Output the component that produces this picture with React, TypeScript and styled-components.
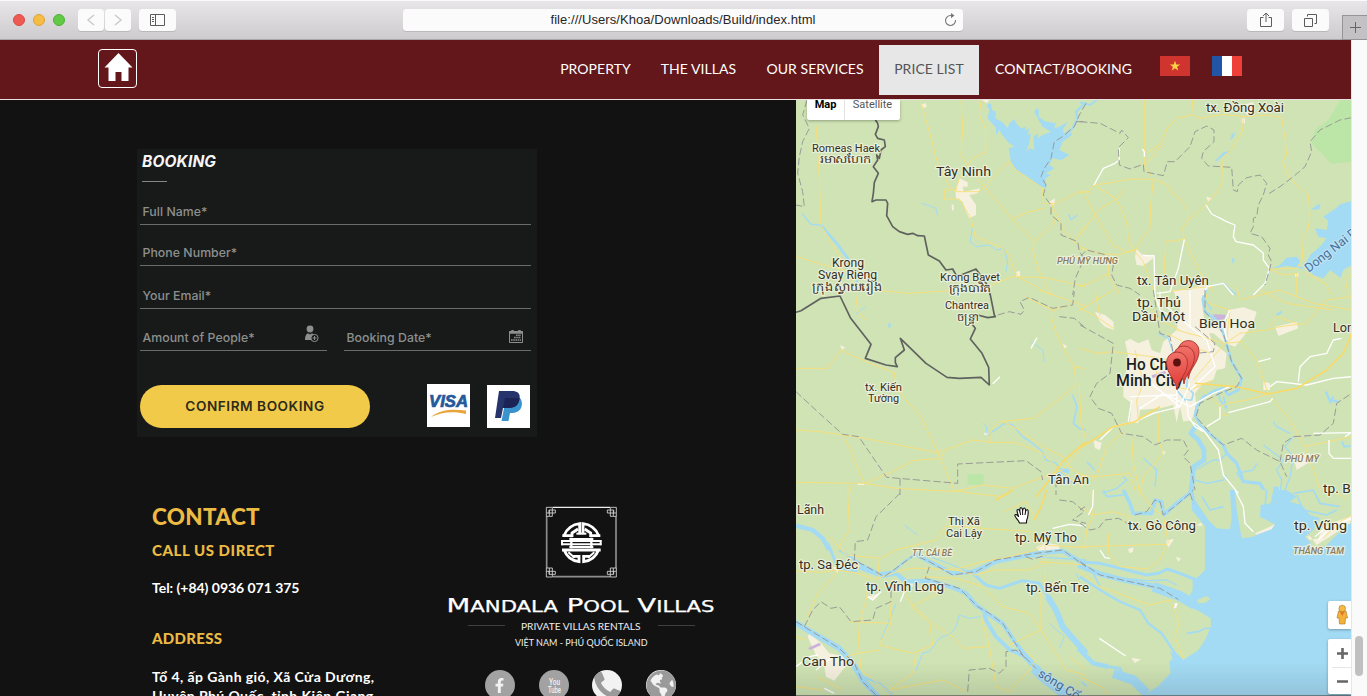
import React from 'react';
import styled, { createGlobalStyle } from 'styled-components';
import { FaFacebookF, FaPhoneAlt, FaGlobeAmericas } from 'react-icons/fa';

const GlobalStyle = createGlobalStyle`
  * { box-sizing: border-box; }
  html, body { margin: 0; padding: 0; overflow: hidden; background: #121212; }
  svg { display: block; flex: none; }
`;

const brand = 'Lato, "Open Sans", sans-serif';
const formFont = 'Inter, "Open Sans", sans-serif';

const Window = styled.div`
  width: 1367px;
  height: 696px;
  display: flex;
  flex-direction: column;
  overflow: hidden;
`;

/* ---------- browser toolbar ---------- */

const Toolbar = styled.header`
  position: relative;
  height: 40px;
  flex: none;
  display: flex;
  align-items: flex-start;
  padding: 8px 37px 0 13px;
  background: linear-gradient(#e8e6e8, #d9d7d9 55%, #cdcbcd);
  border-top: 1px solid #fafafa;
  border-bottom: 1px solid #a9a5a8;
`;

const Lights = styled.div`
  display: flex;
  gap: 8px;
  padding-top: 5px;
  width: 65px;
`;

const Light = styled.span<{ $fill: string; $edge: string }>`
  width: 12px;
  height: 12px;
  border-radius: 50%;
  background: ${(p) => p.$fill};
  border: 1px solid ${(p) => p.$edge};
`;

const ToolButton = styled.div<{ $w: number; $gap?: number }>`
  width: ${(p) => p.$w}px;
  height: 22px;
  margin-right: ${(p) => p.$gap ?? 0}px;
  display: flex;
  align-items: center;
  justify-content: center;
  flex: none;
  border-radius: 3.5px;
  background: #fcfbfc;
  box-shadow: 0 1px 0 #bab8ba;
`;

const AddressBar = styled(ToolButton)`
  position: relative;
  margin-left: 227px;
  font: 13px/22px "Liberation Sans", Arial, sans-serif;
  letter-spacing: 0.06px;
  color: #262626;
`;

const Reload = styled.div`
  position: absolute;
  right: 6px;
  top: 4px;
`;

const NewTab = styled.div`
  position: absolute;
  right: 0;
  bottom: -1px;
  width: 25px;
  height: 25px;
  display: flex;
  align-items: center;
  justify-content: center;
  background: #c3c1c3;
  border: 1px solid #969496;
  border-right: 0;
`;

/* ---------- page ---------- */

const Viewport = styled.div`
  display: flex;
  flex: 1;
  min-height: 0;
`;

const Page = styled.div`
  width: 1351px;
  display: flex;
  flex-direction: column;
`;

const ScrollTrack = styled.div`
  flex: 1;
  padding: 596px 0 0 3px;
  background: #fafafa;
  border-left: 1px solid #e6e6e6;
`;

const ScrollThumb = styled.div`
  width: 8px;
  height: 40px;
  border-radius: 4px;
  background: #c0c0c0;
`;

const Nav = styled.nav`
  height: 60px;
  flex: none;
  display: flex;
  align-items: flex-start;
  padding: 5px 0 0 98px;
  background: #63171b;
  border-bottom: 1px solid #eadfe0;
`;

const Home = styled.a`
  width: 39px;
  height: 39px;
  margin-top: 4px;
  margin-right: 408px;
  border: 1px solid #fff;
  border-radius: 4px;
`;

const NavLink = styled.a<{ $w: number; $active?: boolean }>`
  width: ${(p) => p.$w}px;
  height: 50px;
  text-align: center;
  white-space: nowrap;
  font: 14px/47px ${brand};
  letter-spacing: 0.06px;
  color: ${(p) => (p.$active ? '#555' : '#fff')};
  background: ${(p) => (p.$active ? '#e7e7e7' : 'transparent')};
`;

const Flag = styled.span<{ $gap: number }>`
  margin: 11px 0 0 ${(p) => p.$gap}px;
`;

const Body = styled.main`
  flex: 1;
  display: flex;
  min-height: 0;
`;

const Left = styled.section`
  width: 796px;
  padding: 49px 0 0 137px;
  background: #121212;
  overflow: hidden;
`;

/* ---------- booking form ---------- */

const Card = styled.form`
  width: 400px;
  height: 288px;
  padding: 2px 6px 0 3px;
  background: #171a19;
  font-family: ${formFont};
`;

const CardTitle = styled.h2`
  margin: 0 0 0 2px;
  font: italic 700 15.5px/22px ${formFont};
  color: #f6f6f6;
  letter-spacing: 0.15px;
`;

const TitleRule = styled.div`
  width: 25px;
  height: 1px;
  margin: 8px 0 0 2px;
  background: #858786;
`;

const Field = styled.div<{ $top: number; $w?: number }>`
  width: ${(p) => p.$w ?? 391}px;
  height: 26px;
  margin-top: ${(p) => p.$top}px;
  padding: 0 8px 0 2.5px;
  display: flex;
  justify-content: space-between;
  border-bottom: 1px solid #6b6d6c;
  font: 500 12.3px/26px ${formFont};
  letter-spacing: 0.04px;
  color: #8d8f8e;
`;

const FieldRow = styled.div`
  display: flex;
  justify-content: space-between;
`;

const Actions = styled.div`
  display: flex;
  margin-top: 33px;
  align-items: flex-start;
`;

const Confirm = styled.div`
  width: 230px;
  height: 43px;
  flex: none;
  margin: 1px 57px 0 0;
  border-radius: 22px;
  background: #f1ca49;
  text-align: center;
  font: 600 13.6px/42px ${formFont};
  color: #2d2a1a;
  letter-spacing: 0.55px;
`;

const PayBadge = styled.div<{ $top?: number; $gap?: number }>`
  width: 43px;
  height: 43px;
  flex: none;
  margin: ${(p) => p.$top ?? 0}px ${(p) => p.$gap ?? 0}px 0 0;
  background: #fff;
`;

/* ---------- contact ---------- */

const Footer = styled.div`
  display: flex;
  padding: 63px 0 0 15px;
`;

const Contact = styled.div`
  width: 295px;
  font-family: ${brand};
  white-space: nowrap;
`;

const ContactTitle = styled.h2`
  margin: 0;
  font: 900 22.5px/33px ${brand};
  letter-spacing: 0.3px;
  color: #ecbb43;
`;

const Subtitle = styled.h3<{ $top: number; $track: number }>`
  margin: ${(p) => p.$top}px 0 0;
  font: 900 15px/20px ${brand};
  letter-spacing: ${(p) => p.$track}px;
  color: #ecbb43;
`;

const Line = styled.p<{ $top?: number; $track?: number }>`
  margin: ${(p) => p.$top ?? 0}px 0 0;
  font: 700 14px/19px ${brand};
  letter-spacing: ${(p) => p.$track ?? 0}px;
  color: #fff;
`;

const Brand = styled.div`
  width: 268px;
  display: flex;
  flex-direction: column;
  align-items: center;
  padding-top: 6px;
`;

const Social = styled.div`
  display: flex;
  gap: 23.7px;
  margin: 17px 1px 0 0;
`;

const Circle = styled.div<{ $light?: boolean }>`
  width: 30px;
  height: 30px;
  flex: none;
  border-radius: 50%;
  overflow: hidden;
  display: flex;
  align-items: center;
  justify-content: center;
  background: ${(p) => (p.$light ? '#f2f2f2' : '#a2a2a2')};
  color: ${(p) => (p.$light ? '#9a9a9a' : '#f2f2f2')};
`;

/* ---------- map ---------- */

const MapArea = styled.section`
  position: relative;
  width: 555px;
  overflow: hidden;
  background: #cfe3b4;
`;

const MapType = styled.div`
  position: absolute;
  left: 11px;
  top: 0;
  width: 93px;
  height: 20px;
  display: flex;
  background: #fff;
  border-radius: 0 0 2px 2px;
  box-shadow: 0 1px 3px rgba(0, 0, 0, 0.3);
  font: 11px/9px Roboto, sans-serif;
  color: #565656;
`;

const TypeOption = styled.span<{ $on?: boolean }>`
  width: ${(p) => (p.$on ? 38 : 55)}px;
  text-align: center;
  font-weight: ${(p) => (p.$on ? 700 : 400)};
  color: ${(p) => (p.$on ? '#000' : '#565656')};
  border-right: ${(p) => (p.$on ? '1px solid #e3e3e3' : '0')};
`;

const Control = styled.div<{ $top: number; $h: number }>`
  position: absolute;
  right: 0;
  top: ${(p) => p.$top}px;
  width: 23px;
  height: ${(p) => p.$h}px;
  background: #fff;
  border-radius: 2px 0 0 2px;
  box-shadow: 0 1px 3px rgba(0, 0, 0, 0.3);
`;

const Shade = styled.div`
  position: absolute;
  left: 0;
  right: 0;
  bottom: 0;
  height: 34px;
  background: linear-gradient(rgba(0, 0, 0, 0), rgba(0, 0, 0, 0.1));
  border-bottom: 1px solid rgba(60, 60, 60, 0.6);
`;

type Stroke = [string, number];
interface Tile {
  x: number;
  y: number;
  water?: string;
  rivers?: Stroke[];
  land?: string;
  park?: string;
  urban?: string;
  lilac?: string;
  roads: string;
  main?: string;
  white?: string;
  admin?: string;
  border?: string;
}

/* Every tile is drawn at three units to the pixel. */
const tiles: Tile[] = [
  {
    x: 796, y: 95,
    water:
      'M572 30L585 25L588 45L600 50L597 70L617 80L625 88L635 100L640 85L655 72L660 85L675 100L690 95L688 108L700 100L695 120L705 115L700 145L690 170L700 160L715 165L712 125L725 115L725 130L740 120L765 110L740 95L725 70L715 50L722 38L728 45L728 65L745 78L775 85L780 78L775 100L790 95L815 80L800 105L805 120L825 112L828 120L800 140L790 165L820 180L795 195L770 190L760 210L775 220L750 235L765 240L748 250L752 280L735 275L700 250L660 225L645 200L638 160L655 155L635 140L615 115L610 105L600 120L600 98L575 70L580 45Z M695 190L715 178L738 183L722 198L705 202Z',
    rivers: [
      ['M805 118L830 100L845 70L840 50L870 22', 7],
      ['M818 358L825 374L845 360', 4],
      ['M18 355L45 388L75 390', 4],
      ['M75 390L100 420L130 455L155 490L150 520L185 560', 8],
      ['M375 325L400 332L420 340L425 365M530 400L522 440L540 455L580 450L600 465L625 460L635 500L630 530', 3],
    ],
    urban:
      'M490 250L515 262V275L500 275L503 290L530 285L553 280L545 295L520 300L540 330V360L520 370L510 350L500 320L480 310L478 285ZM375 28L390 25L392 36L380 40ZM558 15H580L572 25ZM758 322L776 310V328L765 334ZM660 530L672 528V545H660ZM467 330L473 328V345L468 347Z',
    roads:
      'M375 15L383 50L400 110L425 205L458 270L470 285M495 15L500 100L495 180L510 205L560 270L650 375L715 440M555 15L550 60L568 100L570 170L530 190L490 250L480 285M478 290L550 290L590 250L620 215L640 200L660 225L740 280L742 325L780 325L850 290H870M445 285H485M445 285V312H490L525 370L538 425L600 450L630 465L665 545L765 600M650 370L700 350L745 340M770 325L775 385L715 440L710 465L730 530L765 600M765 325L800 400L835 440L870 390M835 440L870 465M60 90L65 170L70 250L75 390L115 460L150 520L170 545M0 483L80 510L150 525L180 580L340 595L560 580L650 545L750 548L870 575',
    admin:
      'M33 15L20 60L40 100L20 140L10 185L5 235L20 290L25 335L0 330M870 25L850 60L835 95L800 125L775 140L765 190L745 220L735 245L750 270L742 300L765 330V360L795 385V420L845 440L850 470L865 490L838 550L830 600M840 80H870',
    border:
      'M238 75L245 85L247 95L238 118L245 130L265 135L268 155L255 165L250 190L242 180L245 195L232 215L247 235L235 262L232 295L228 320L240 315H270L275 325L272 362L290 395L310 410L335 418L350 415L365 422L385 423L397 480L430 498L450 525L470 522L480 540H495L540 522L560 550L580 580L582 600',
  },
  {
    x: 1080, y: 95,
    park: 'M780 15H815V200L755 207L695 145L705 105L745 75Z',
    water:
      'M815 318L780 328L770 338L730 365L745 378L740 405L705 400L715 425L740 430L720 455L690 480L675 510L700 540L730 550L750 525L782 548L790 525L815 510ZM692 345L712 330L722 328L718 342ZM570 523L600 510L620 488L650 485L662 500L650 518L620 512ZM455 490L465 492L458 508ZM405 198L430 172L450 168L425 186L408 200ZM450 135L455 118L466 112L460 128Z',
    rivers: [
      ['M0 22L30 30L50 15', 5],
      ['M370 600L380 575L430 565L445 580L470 600M555 565L568 525M670 520L635 512', 4],
    ],
    urban:
      'M170 462L185 478L220 482V490L190 512L170 510L165 485ZM335 580L370 570L390 572L370 600H330ZM490 30L520 20L525 50L500 60ZM378 305L398 310L385 320ZM485 70H495V85H485ZM645 535H655V545H645Z',
    roads:
      'M193 15V210L215 245M0 295L25 290L42 270L100 262L150 252L220 253L262 270L275 292L300 310L323 345V375L308 400L313 433L335 480L360 530L400 590M335 60L338 15M490 65L430 58L360 70L335 60L290 70L262 100L245 145L205 170L193 175M245 150L195 212M490 65L488 105L475 130L450 170L430 185L428 215L430 255L415 285L378 330L350 355L323 375M490 65L560 60L605 68L615 130L620 180L608 200L628 250L655 275L685 300L690 360L685 400L665 430L668 490L650 520L570 523M220 253L212 330L210 400L180 440L165 470L155 465L140 470L100 452L75 410L40 350L20 310L25 290M42 270L60 282L110 312L137 280M110 312L140 380L145 435L165 465M0 420L45 360L62 340L110 312M313 433L258 440L255 480L250 590M165 470L190 500L225 600M0 460L60 475L110 480L165 465M85 510V545L100 565L120 600M0 575L50 555L85 535M815 540L795 550L805 600M570 523L610 540L650 535V600M675 530L740 570L755 600M270 590L330 580L400 575',
    white:
      'M42 270L70 220L105 205L118 195V160M378 330L395 357L440 380L465 390L460 425L468 440L520 450L550 475V495L568 520L555 565L520 600M313 433L295 520L270 590L230 595M190 482H222L225 600M370 600L380 575L430 565L460 600M187 162L193 170V185',
    admin:
      'M0 80L60 85L100 105L120 115L125 105L145 128L115 158L118 210L150 222L190 208L192 230L250 242L262 200L285 200L330 155L345 110L380 93L402 105V140L370 170L365 190L385 213L455 217L460 285L472 290L475 270L500 248L540 240L560 265L550 300L535 330L530 365L520 370V395L510 415L545 425L570 460L565 480L575 500L568 525L555 570M815 68L780 75L720 105L690 140L695 170L675 215L640 245L600 275L560 300M0 485L20 465L80 480L100 510L95 540L110 570L150 580L180 600',
  },
  {
    x: 796, y: 290,
    park: 'M515 552H563V584H515Z',
    water: 'M276 102L284 99V112H277Z',
    rivers: [
      ['M180 72L208 50M705 155L740 180L745 215M560 400L572 410V430L590 440', 3],
      ['M830 315L843 350L832 400L850 415L870 420', 5],
      ['M580 430L605 415L625 400L650 405L680 440L710 460L740 485L750 510L780 520L800 550L830 580', 4],
      ['M770 570L800 540L820 545', 12],
    ],
    urban: 'M132 165L148 172L138 180ZM800 160L815 170L805 175ZM565 428H578V435H565ZM185 580H205V585H185Z',
    roads:
      'M178 10L185 60L210 93M0 235H95L135 180L170 197L210 215L295 248L300 290L330 330L375 380L425 488L440 520L475 605M0 420L70 425L190 442L425 488M585 457L585 420L610 395L715 385L840 285L835 230L805 180L780 130L765 75L770 60L690 22M835 230L870 237M850 280L855 400L870 450M205 580L290 545L350 512L435 505L445 485M145 440L205 580L0 577M205 580L300 595L475 605L560 585L650 595L800 540L870 460M165 585L160 615M730 0L800 25L870 50M820 45L770 60M800 500L830 540L870 560M620 395L670 420L740 470L800 500M425 488L530 450L585 457L660 458L740 490L790 540L830 570',
    main: 'M720 620L760 570L800 515L870 455',
    white: 'M590 282L612 260M705 175L723 143',
    admin:
      'M0 305L70 370L140 433L188 440L272 562L485 580V522L690 512L735 545L740 570M312 565V615M605 75L640 65L675 73L685 60L672 35L700 22L770 55L830 45L835 5M790 80L835 85L870 115M780 570V615',
    border:
      'M582 10L595 75L598 80L575 83L545 75L530 85V105L538 115L523 147L558 190L578 232L580 285L555 262L490 265L453 262L390 220L313 145L325 180L298 203V218L304 230L270 225L208 205L225 163L163 83L132 18L75 25L15 62L0 67',
  },
  {
    x: 1080, y: 290,
    urban:
      'M135 155L150 146L175 160L205 148L215 180L240 190L250 155L290 120L300 60L280 0H370L368 60L375 100L400 160L440 190L435 235L410 240L400 270L370 280L345 310L350 350L335 390L310 395L300 350L290 398L280 345L240 355L180 360L175 400L150 395L155 340L130 320V270L140 240L145 200ZM445 60L490 52L530 65L520 100L490 140L465 170L435 160L400 130L375 130L390 100L440 95ZM45 65L75 75L100 95L102 120L75 110L60 95ZM585 110L650 95L655 115L595 138ZM550 275L570 280V300H550ZM40 450L65 458L60 480L45 475ZM640 500L690 490L690 515L650 540ZM245 482L258 486L250 495ZM240 0L250 60L230 45Z',
    lilac: 'M398 73L436 74V86L410 92ZM215 256L255 243L260 250L218 265Z',
    rivers: [
      ['M378 0L368 30L375 65L415 95L430 130L438 155L455 215L485 265L475 300L445 315L430 295L410 300L370 320L350 350L345 375L360 405L400 440L430 465', 8],
      ['M290 300L315 330L335 330L340 310L320 290L325 230M415 305L420 330L440 355L430 320', 5],
      ['M350 405L332 430L355 450L372 480L372 510L340 530L335 600', 14],
      ['M430 465L440 490L470 520L490 575L540 580L560 615', 10],
      ['M550 465L610 510L590 540L605 570L600 615M640 440L615 470L640 500L630 560L615 600M580 395L590 410L630 430M490 575L470 550L520 540L530 520M235 130L265 145L280 190M345 540L400 510L420 510L440 490M345 570L380 580L430 570L440 555M65 610L110 595L140 570L130 560M190 505L230 540L225 590M20 515L45 540M370 20L395 60', 4],
      ['M738 305L748 330L775 335M590 75L605 65M750 340L760 320', 7],
      ['M787 455L792 470L812 468', 6],
    ],
    roads:
      'M0 55L50 80L100 115M100 185L215 200L300 220M0 175L50 190L100 185L100 160M235 370V450L250 490L190 560L180 610M435 160L400 200L340 270M435 160L480 130L560 120L600 110L680 100L740 30L815 20M480 150L530 210L565 312L630 390L675 470L720 600M565 312L500 330L445 340L420 350M345 280L400 330L420 350V375H445M155 440L160 520L180 610M130 425L80 470L50 560L0 555M815 60L700 40L600 0M540 0L620 40L760 60M470 -10L480 30L600 0M675 470L815 440M0 590L50 560L150 550L165 600M0 60L100 0M45 0L60 80M190 30L240 90L300 120M165 180L190 280L170 330L175 390M260 130L340 170L390 190M375 0L385 40L450 60L440 150M215 200L240 280L330 300L400 270M570 110L590 80L650 100M290 120L435 160L485 155',
    main:
      'M0 472L40 450L100 410L165 395L240 350M345 280L470 290L565 312L650 295L740 240L790 190L815 130',
    white:
      'M60 450L100 410L165 395L220 370L300 350L330 280M445 368L570 335L578 325M570 290L590 275L680 285L760 265L815 260M655 275L660 230L690 200L740 190L760 150L785 145M535 215L572 205M330 0V110L380 150L405 230L330 300M155 330L145 395M330 390L370 420L415 480L430 555L475 610M320 330L325 380L345 410L370 425M420 350V385L380 410M747 450V490L760 505H815M180 355L250 310L300 350M200 270L250 310L330 350L400 310L450 290M150 320L290 315M260 50L330 110M290 300V350M700 430L815 428L795 440M220 0L240 60L300 90M450 60L430 100L440 150',
    admin:
      'M0 105L100 160L90 250L50 280L30 320L55 355L95 370L125 430L190 440L225 465L260 450H310L325 480L310 500L330 520L345 600M220 0L240 130L270 140L280 190M345 110L405 160L400 185L350 190M375 0V65L430 130L455 215L485 265L470 290L420 310L360 340L348 380L400 440L430 465L485 445L530 480L600 515L620 560M600 515L610 460L640 440L720 435L760 400L770 340L815 310',
  },
  {
    x: 796, y: 490,
    urban:
      'M40 430L75 460L100 490L150 500L160 520L140 540L115 572L90 560L85 530L60 495L35 440ZM720 172L750 158L790 165V178L730 182ZM110 232L130 225L125 250ZM330 285L350 275L350 290ZM215 320L250 310L230 330Z',
    lilac: 'M36 474L70 458L75 466L42 480Z',
    rivers: [
      ['M0 107L50 120L80 145L100 180', 13],
      ['M95 160L110 195L125 235L185 242', 9],
      ['M130 180L200 225L250 250L290 245L325 215L355 195', 7],
      ['M190 232L260 258L300 250L330 275L400 272L470 292L510 310L540 345L575 370L620 400L660 460L690 500', 13],
      ['M355 190L400 215L470 250L540 245L600 215L720 190L800 183L870 225', 13],
      ['M530 250L570 285L610 295L680 272L730 280L760 325', 9],
      ['M755 320L780 360L800 410L835 450L870 490', 18],
      ['M565 370L570 390L600 440L640 478L690 500', 12],
      ['M680 490L720 535', 18],
      ['M715 535L740 560L810 615', 30],
      ['M-5 396L60 435L130 475L170 520L200 570L245 620', 17],
      ['M200 560L250 580L290 615', 7],
      ['M555 380L520 385L490 375L480 410L465 430L430 445L400 485L380 490L360 540M325 105L365 135M760 400L805 440L790 475M300 340L280 390L255 450M840 250L850 270', 3],
      ['M390 195L470 225L520 245L610 205L710 200L870 210', 4],
    ],
    roads:
      'M0 243L75 247L125 240L185 250L235 268L290 250L340 235L400 235L470 240L560 215L640 200L720 180L740 165L870 173M155 0L160 120L130 170L150 195L255 205L300 180L420 150L450 108L560 115L710 125M100 140L150 195M720 90L690 35L625 65M245 205L250 265M125 245L65 310L35 380M213 268V320L190 400L185 490M290 270L280 300L285 400L160 395M285 400L250 465L350 490L410 465L400 395L345 340L320 300M400 395L345 350L425 310M400 395L470 440L500 475L580 470L555 380M580 470L600 590L640 605L700 540L720 510L690 480M735 420V300M380 260L480 265L560 290L620 350L700 370L735 420L810 540L870 555M735 420L640 465M470 0L530 10L620 20L650 0M360 490L350 550L280 600L440 570L510 605M0 440L30 450M150 500L185 490L250 480M190 490L195 540L290 615M745 130L750 215L745 300M730 215L870 225M460 235L540 255L590 240H700L750 215M65 560L140 600M870 540L820 500M0 590L80 600',
    main: 'M752 0L735 50L715 90M600 30L650 0',
    white: 'M770 115L820 103L870 108M325 305L313 335M215 320L230 330L255 305M0 530L40 500L65 495M60 540L110 500M85 595L115 610',
    admin:
      'M312 10L240 80L215 150L178 155L175 210L230 240L265 260L355 195L400 215L470 255L540 245L600 210L720 190L800 180L870 230M400 230L388 265L490 295L545 350L580 370L620 400L680 495L720 535M25 410L50 360L75 335L105 355L130 350L165 395L230 390L240 355L285 335V290M0 395L130 475L175 520L200 575L240 615M515 605L520 540L580 535L610 550L630 530V485L660 480L690 505M790 30L830 35L865 65L830 90L870 100M690 200L710 208L750 195',
  },
  {
    x: 1080, y: 490,
    water:
      'M335 0H815V620H185L235 588L272 548L268 515L278 505L270 485L290 490L310 510L355 480L375 450L393 410L392 385L360 365L290 330L240 300L270 292L325 325L338 300V270L350 265L375 240V108L335 60Z',
    land:
      'M340 0L345 30L385 90L410 115L450 118L455 85L450 0ZM465 0L470 60L485 145L520 140L585 103L540 80L542 45L590 40L580 0ZM620 0L650 20L630 35L665 45L690 75L720 85L700 120L675 140L690 155L705 195L740 165L775 130L815 95V0ZM350 330L380 318L392 328L375 338L355 340Z',
    urban:
      'M525 130L585 103L575 118L530 134ZM680 140L690 138L710 165L750 140L815 95V78L765 95L730 110L715 145L690 150ZM145 178L160 172L158 186L148 188ZM258 152L282 147L265 172ZM288 202L302 205L296 215ZM155 505L182 508L165 518ZM70 385L75 395ZM282 340L293 342L288 355ZM350 105L365 98V108Z',
    rivers: [
      ['M-5 215L60 220L100 230L200 255L235 250L262 237L300 250L350 270', 9],
      ['M-5 225L60 252L130 270L240 292L300 318', 16],
      ['M220 290L300 318L345 345', 30],
      ['M80 252L110 262L200 272L260 270L290 285', 4],
      ['M0 260L60 300L120 335L180 360L205 400L245 430L285 490', 7],
      ['M-5 475L40 520L85 530', 14],
      ['M100 550L160 570L200 610', 28],
      ['M85 530L120 535L130 560', 8],
      ['M130 0L150 40L160 70L215 70L225 30L245 35L250 75L290 40L330 10L335 -20', 11],
      ['M70 0L80 20L130 15M365 20L390 60L430 50M560 0L555 50M640 10L700 0L720 40L780 50M650 15L670 60L740 75L770 60M320 430L355 425L375 415L393 415M40 250L60 290M20 590L5 575', 5],
      ['M590 -10L580 40L550 70', 16],
      ['M455 0L462 60L458 110', 9],
    ],
    roads:
      'M0 170L260 163L240 210L205 237L120 230L85 190V130M35 75L100 65L150 80L130 100M180 5L215 50L250 80L265 160M15 170L20 120L40 75L0 50M0 245L60 290L210 345L270 330L298 400L285 440L310 505M0 560L65 590L85 615M730 145L780 95L815 75M750 0L800 25M35 75L40 0',
    white: 'M40 0L38 50L25 75M60 180L75 203L90 205M58 445L137 498M283 355L290 340M465 0L490 50L495 100L520 125M715 150L755 108L815 85M705 140L740 110',
    admin:
      'M0 215L60 255L240 295L295 328M0 100L30 120L55 115L75 90L115 85L135 95L150 110M165 75L200 65L225 30L240 35L250 75L290 45L330 10L340 0M330 10L340 40M0 60L15 50',
  },
];

interface Label {
  t: string;
  x: number;
  y: number;
  w: number;
  s?: number;
  kind?: 'area' | 'city' | 'water' | 'khmer';
  rot?: number;
}

const labels: Label[] = [
  { t: 'tx. Đồng Xoài', x: 1206, y: 112.5, w: 78 },
  { t: 'Tây Ninh', x: 936, y: 176, w: 55 },
  { t: 'Romeas Haek', x: 812, y: 152.5, w: 68, s: 11 },
  { t: 'រមាសហែក', x: 820, y: 163, w: 51, s: 11, kind: 'khmer' },
  { t: 'Krong', x: 832, y: 267.5, w: 32, s: 12 },
  { t: 'Svay Rieng', x: 818, y: 279.5, w: 59, s: 12 },
  { t: 'ក្រុងស្វាយរៀង', x: 812, y: 291, w: 71, s: 12, kind: 'khmer' },
  { t: 'Krong Bavet', x: 940, y: 281.5, w: 60, s: 11 },
  { t: 'ក្រុងបាវិត', x: 949, y: 292, w: 42, s: 11, kind: 'khmer' },
  { t: 'Chantrea', x: 945, y: 309.5, w: 44, s: 11 },
  { t: 'ចន្ទ្រា', x: 957, y: 321, w: 21, s: 11, kind: 'khmer' },
  { t: 'PHÚ MỸ HƯNG', x: 1057, y: 264, w: 61, s: 9, kind: 'area' },
  { t: 'tx. Tân Uyên', x: 1137, y: 285.5, w: 72 },
  { t: 'tp. Thủ', x: 1137, y: 307.5, w: 44 },
  { t: 'Dầu Một', x: 1132, y: 321.5, w: 53 },
  { t: 'Bien Hoa', x: 1199, y: 328, w: 56 },
  { t: 'Lon', x: 1333, y: 332.5, w: 21 },
  { t: 'Ho Chi', x: 1126, y: 370, w: 46, kind: 'city' },
  { t: 'Minh City', x: 1116, y: 386, w: 67, kind: 'city' },
  { t: 'tx. Kiến', x: 865, y: 391.5, w: 37, s: 11 },
  { t: 'Tường', x: 868, y: 402.5, w: 31, s: 11 },
  { t: 'PHÚ MỸ', x: 1285, y: 462, w: 34, s: 9, kind: 'area' },
  { t: 'Tân An', x: 1048, y: 484.5, w: 41 },
  { t: 'tp. Bà Rịa', x: 1323, y: 493.5, w: 58 },
  { t: 'Lãnh', x: 797, y: 514, w: 27 },
  { t: 'Thị Xã', x: 948, y: 525.5, w: 32, s: 11 },
  { t: 'Cai Lậy', x: 946, y: 537, w: 36, s: 11 },
  { t: 'tp. Mỹ Tho', x: 1015, y: 542.5, w: 62 },
  { t: 'tx. Gò Công', x: 1128, y: 530.5, w: 68 },
  { t: 'tp. Vũng Tàu', x: 1294, y: 530, w: 80 },
  { t: 'TT. CÁI BÈ', x: 912, y: 556, w: 40, s: 9, kind: 'area' },
  { t: 'THẮNG TAM', x: 1293, y: 554, w: 51, s: 9, kind: 'area' },
  { t: 'tp. Sa Đéc', x: 799, y: 569.5, w: 59 },
  { t: 'tp. Vĩnh Long', x: 866, y: 591.5, w: 78 },
  { t: 'tp. Bến Tre', x: 1026, y: 592.5, w: 63 },
  { t: 'Can Tho', x: 802, y: 666, w: 52 },
  { t: 'Dong Nai River', x: 1309, y: 273, w: 82, s: 12.5, kind: 'water', rot: -38 },
  { t: 'sông Cổ Chiên', x: 1037, y: 676, w: 82, s: 12.5, kind: 'water', rot: 32 },
];

const labelFill = { area: '#8a7a5c', city: '#1e1e1e', water: '#46709e', khmer: '#3a3224', town: '#352e22' };

function Layer({ draw }: { draw: (t: Tile) => React.ReactNode }) {
  return (
    <>
      {tiles.map((t) => (
        <g key={`${t.x}-${t.y}`} transform={`translate(${t.x} ${t.y}) scale(.33333)`}>
          {draw(t)}
        </g>
      ))}
    </>
  );
}

function Pin({ x, y, dot }: { x: number; y: number; dot?: boolean }) {
  return (
    <g transform={`translate(${x} ${y})`}>
      <path
        d="M0 0C-1 -10 -10.5 -16 -10.5 -27.5A10.5 10.5 0 0 1 10.5 -27.5C10.5 -16 1 -10 0 0Z"
        fill="url(#pin)" stroke="#a8322c" strokeWidth=".9"
      />
      {dot && <circle cy="-27.5" r="3.9" fill="#5a120e" />}
    </g>
  );
}

function MapDrawing() {
  return (
    <svg width="555" height="596" viewBox="796 100 555 596" fill="none" strokeLinejoin="round">
      <defs>
        <linearGradient id="pin" x1="0" y1="0" x2="0" y2="1">
          <stop offset="0" stopColor="#f0716a" />
          <stop offset="1" stopColor="#df3a33" />
        </linearGradient>
      </defs>
      <Layer draw={(t) => (
        <>
          <path d={t.park} fill="#bce5a8" />
          <path d={t.urban} fill="#f6f0df" />
          <path d={t.lilac} fill="#cbb3dc" />
        </>
      )} />
      <Layer draw={(t) => (
        <>
          <path d={t.water} fill="#a3dbf4" />
          <path d={t.land} fill="#cfe3b4" />
          {t.land && <path d={t.urban} fill="#f6f0df" />}
          {t.rivers?.map(([d, w]) => <path key={d} d={d} stroke="#a3dbf4" strokeWidth={w} />)}
        </>
      )} />
      <Layer draw={(t) => <path d={t.roads} stroke="#f9df78" strokeWidth="2.8" />} />
      <Layer draw={(t) => <path d={t.white} stroke="#fff" strokeWidth="4" />} />
      <Layer draw={(t) => <path d={t.main} stroke="#fbd963" strokeWidth="4.5" />} />
      <Layer draw={(t) => <path d={t.admin} stroke="#9a9b98" strokeWidth="3" strokeDasharray="22 9" />} />
      <Layer draw={(t) => <path d={t.border} stroke="#5f625e" strokeWidth="5" />} />
      {labels.map((l) => {
        const kind = l.kind ?? 'town';
        return (
          <text
            key={l.t} x={l.x} y={l.y - 0.4} textLength={l.w} lengthAdjust="spacingAndGlyphs"
            transform={l.rot ? `rotate(${l.rot} ${l.x} ${l.y})` : undefined}
            fontFamily='Roboto, "Noto Sans", "DejaVu Sans", sans-serif'
            fontSize={l.s ?? (kind === 'city' ? 16 : 13.6)}
            fontWeight={kind === 'city' || kind === 'area' ? 500 : 400}
            fontStyle={kind === 'area' ? 'italic' : 'normal'}
            fill={labelFill[kind]} stroke={kind === 'water' ? '#c4e6f4' : '#f1f4e4'}
            strokeWidth="2.4" strokeOpacity=".8" paintOrder="stroke"
          >
            {l.t}
          </text>
        );
      })}
      <Pin x={1188.5} y={378.5} />
      <Pin x={1184} y={384} />
      <Pin x={1177} y={390} dot />
      <path
        transform="translate(1014 507)"
        d="M4.5 14C3 11.5 1 10 .8 8.5C1 7 3 7.5 4 9L4.5 9.5C4 7.5 2.800 4.500 3 3.300C3.500 2 5 2.300 5.500 3.800L6 5C5.800 3.500 5.600 1.500 6.500 .8C7.800 .3 8.500 1.500 8.600 4C8.800 2 9.300 .9 10.400 1C11.700 1.200 11.600 3 11.500 4.600C11.900 3.200 12.500 2.500 13.500 2.800C14.600 3.300 14.200 5 14.100 7C14 10 13.500 11.500 12.500 14V16H5.500Z"
        fill="#fff" stroke="#111" strokeWidth="1.1"
      />
      <path transform="translate(1014 507)" d="M6 5L6.600 8M8.600 4V8M11.500 4.600L11 8" stroke="#111" strokeWidth="1" />
    </svg>
  );
}

/* ---------- brand emblem, three units to the pixel ---------- */

function Emblem() {
  const corner = 'M1 19V1H19V9M9 19V9H28V18H1M10 28V9M10 28H19V9M1 19V28H10';
  return (
    <svg width="72" height="72" viewBox="345 49 216 216" fill="none" stroke="#eee">
      <path d="M350 80V235M558 80V235M368 261H540" stroke="#8e8e8e" strokeWidth="5" />
      <path d="M368 53H540" strokeWidth="4" />
      <g strokeWidth="2.6" stroke="#d6d6d6">
        <path d={corner} transform="translate(348 52)" />
        <path d={corner} transform="translate(560 52) scale(-1 1)" />
        <path d={corner} transform="translate(348 263) scale(1 -1)" />
        <path d={corner} transform="translate(560 263) scale(-1 -1)" />
      </g>
      <g stroke="#fff" strokeWidth="8.5">
        <path d="M402 138A57 57 0 0 1 449 102V134M506 138A57 57 0 0 0 459 102V134" />
        <path d="M397 138H426V130L444 118M511 138H482V130L464 118" />
        <path d="M439 132H469" strokeWidth="6" />
        <path d="M418 148H490M394 154H514M394 164H514M418 172H490" strokeWidth="6" />
        <path d="M396 151V167M512 151V167" strokeWidth="6" />
        <path d="M424 144V176M484 144V176" strokeWidth="7" />
        <path d="M396 181H512M402 180A57 57 0 0 0 447 216V200H428M506 180A57 57 0 0 1 461 216V200H480" />
        <path d="M415 188L434 204M493 188L474 204" strokeWidth="6" />
      </g>
    </svg>
  );
}

function Wordmark() {
  const words = ['Mandala', 'Pool', 'Villas'];
  return (
    <svg width="268" height="75" viewBox="447 578 268 75" fill="#fff">
      <text x="446.500" y="611.500" textLength="268" lengthAdjust="spacingAndGlyphs" fontFamily='"DejaVu Sans", sans-serif' stroke="#fff" strokeWidth=".25">
        {words.map((w, i) => (
          <React.Fragment key={w}>
            <tspan fontSize="19.500">{(i ? ' ' : '') + w[0]}</tspan>
            <tspan fontSize="15">{w.slice(1).toUpperCase()}</tspan>
          </React.Fragment>
        ))}
      </text>
      <path d="M468 625.500H505M658 625.500H695" stroke="#3f3f3f" />
      <g fontFamily="Lato, sans-serif" fontSize="10" fill="#eee">
        <text x="521" y="629.500" textLength="119.500" lengthAdjust="spacingAndGlyphs">PRIVATE VILLAS RENTALS</text>
        <text x="515" y="646" textLength="132.500" lengthAdjust="spacingAndGlyphs">VIỆT NAM - PHÚ QUỐC ISLAND</text>
      </g>
    </svg>
  );
}

export default function App() {
  return (
    <Window>
      <GlobalStyle />
      <Toolbar>
        <Lights>
          <Light $fill="#ee5a52" $edge="#da4a44" />
          <Light $fill="#f6bd45" $edge="#dfa23a" />
          <Light $fill="#62c944" $edge="#4fb034" />
        </Lights>
        <ToolButton $w={26} $gap={1}>
          <svg width="10" height="12" fill="none" stroke="#c9c9c9" strokeWidth="1.400"><path d="M8 1L2 6L8 11" /></svg>
        </ToolButton>
        <ToolButton $w={26} $gap={8}>
          <svg width="10" height="12" fill="none" stroke="#c9c9c9" strokeWidth="1.400"><path d="M2 1L8 6L2 11" /></svg>
        </ToolButton>
        <ToolButton $w={37}>
          <svg width="16" height="12" fill="none" stroke="#5c5c5c"><path d="M.5.5H14.500V11.500H.5ZM5.500.5V11.500M2 3.500H4M2 5.500H4M2 7.500H4" /></svg>
        </ToolButton>
        <AddressBar $w={560} $gap={284}>
          file:///Users/Khoa/Downloads/Build/index.html
          <Reload>
            <svg width="13" height="14" fill="none" stroke="#777" strokeWidth="1.100">
              <path d="M11.500 7A5 5 0 1 1 6.500 2.500H8" />
              <path d="M7 0L10.500 2.600L7 5.200Z" fill="#777" stroke="none" />
            </svg>
          </Reload>
        </AddressBar>
        <ToolButton $w={37} $gap={8}>
          <svg width="12" height="16" fill="none" stroke="#5c5c5c"><path d="M3.500 5.500H.5V14.500H11.500V5.500H8.500M6 10V1M3 4L6 1L9 4" /></svg>
        </ToolButton>
        <ToolButton $w={37}>
          <svg width="13" height="13" fill="none" stroke="#5c5c5c"><path d="M.5 4.500H8.500V12.500H.5ZM3.500 2.500V.5H12.500V9.500H10.500" /></svg>
        </ToolButton>
        <NewTab>
          <svg width="11" height="11" stroke="#666"><path d="M5.500 0V11M0 5.500H11" /></svg>
        </NewTab>
      </Toolbar>
      <Viewport>
        <Page>
          <Nav>
            <Home>
              <svg width="37" height="37" fill="#fff"><path d="M19.500 3L33.500 17.500H29.500V31H22.500V22H16.500V31H9.500V17.500H5.500Z" /></svg>
            </Home>
            <NavLink $w={101}>PROPERTY</NavLink>
            <NavLink $w={105}>THE VILLAS</NavLink>
            <NavLink $w={128}>OUR SERVICES</NavLink>
            <NavLink $w={100} $active>PRICE LIST</NavLink>
            <NavLink $w={169}>CONTACT/BOOKING</NavLink>
            <Flag $gap={12}>
              <svg width="30" height="20">
                <path d="M0 0H30V20H0Z" fill="#d0342f" />
                <path d="M15 4.800L16.300 8.500H20.200L17.100 10.800L18.200 14.600L15 12.300L11.800 14.600L12.900 10.800L9.800 8.500H13.700Z" fill="#f9d343" />
              </svg>
            </Flag>
            <Flag $gap={22}>
              <svg width="30" height="20">
                <path d="M0 0H10V20H0Z" fill="#2156a5" />
                <path d="M10 0H20V20H10Z" fill="#fff" />
                <path d="M20 0H30V20H20Z" fill="#ee4039" />
              </svg>
            </Flag>
          </Nav>
          <Body>
            <Left>
              <Card>
                <CardTitle>BOOKING</CardTitle>
                <TitleRule />
                <Field $top={17}>Full Name*</Field>
                <Field $top={15}>Phone Number*</Field>
                <Field $top={17}>Your Email*</Field>
                <FieldRow>
                  <Field $top={16} $w={187}>
                    Amount of People*
                    <svg width="14" height="18" viewBox="0 0 14 18" fill="#8d8f8e">
                      <circle cx="5" cy="4" r="3.400" />
                      <path d="M0 15C0 10 2 8.500 3 8.200L5 9.500L7 8.200L9 9.500L8 15Z" />
                      <circle cx="9.500" cy="13" r="3.600" fill="#171a19" stroke="#8d8f8e" />
                      <path d="M7.500 12.500H11.500V13.500H7.500ZM9 11H10V15H9Z" />
                    </svg>
                  </Field>
                  <Field $top={16} $w={187}>
                    Booking Date*
                    <svg width="14" height="19" viewBox="0 0 14 19" fill="none" stroke="#8d8f8e">
                      <path d="M.5 6.500H13.500V17.500H.5Z" />
                      <path d="M0 7.500H14M3.500 5V8M10.500 5V8" strokeWidth="2.400" />
                      <path d="M2 15H12M5 12.500H12M7 10.300H12" strokeWidth="1.600" strokeDasharray="1.600 .6" />
                    </svg>
                  </Field>
                </FieldRow>
                <Actions>
                  <Confirm>CONFIRM BOOKING</Confirm>
                  <PayBadge $gap={17}>
                    <svg width="43" height="43">
                      <text x="2" y="23" textLength="39" lengthAdjust="spacingAndGlyphs" fontFamily='"Liberation Sans", sans-serif' fontSize="16.500" fontWeight="700" fontStyle="italic" fill="#24599a" stroke="#24599a" strokeWidth=".7">VISA</text>
                      <path d="M4 33C14 25 26 25 39 26.500V30C26 27 15 28 4 33Z" fill="#e9a53c" />
                    </svg>
                  </PayBadge>
                  <PayBadge $top={1}>
                    <svg width="43" height="43">
                      <path d="M19 13H33C37 18 35 28 25.500 28H23L21.500 36H14.500Z" fill="#3b93cd" />
                      <path d="M12 6H25C32 6 34 10 32 16C30.500 21 27 23 21 23H16L14 33H8Z" fill="#26346c" />
                      <path d="M18 13H32.500C32 20 28 23 21 23H16Z" fill="#1c2456" />
                    </svg>
                  </PayBadge>
                </Actions>
              </Card>
              <Footer>
                <Contact>
                  <ContactTitle>CONTACT</ContactTitle>
                  <Subtitle $top={7} $track={0.55}>CALL US DIRECT</Subtitle>
                  <Line $top={18} $track={-0.03}>Tel: (+84) 0936 071 375</Line>
                  <Subtitle $top={31} $track={0.3}>ADDRESS</Subtitle>
                  <Line $top={19} $track={0.41}>Tổ 4, ấp Gành gió, Xã Cửa Dương,</Line>
                  <Line $track={0.41}>Huyện Phú Quốc, tỉnh Kiên Giang</Line>
                </Contact>
                <Brand>
                  <Emblem />
                  <Wordmark />
                  <Social>
                    <Circle><FaFacebookF size={15} /></Circle>
                    <Circle>
                      <svg width="30" height="30" fill="#f2f2f2" fontFamily="Roboto, sans-serif" fontSize="9" fontWeight="500">
                        <text x="10" y="14.500" textLength="11" lengthAdjust="spacingAndGlyphs">You</text>
                        <text x="9" y="22.500" textLength="13" lengthAdjust="spacingAndGlyphs">Tube</text>
                      </svg>
                    </Circle>
                    <Circle $light><FaPhoneAlt size={27} /></Circle>
                    <Circle $light><FaGlobeAmericas size={31} /></Circle>
                  </Social>
                </Brand>
              </Footer>
            </Left>
            <MapArea>
              <MapDrawing />
              <MapType>
                <TypeOption $on>Map</TypeOption>
                <TypeOption>Satellite</TypeOption>
              </MapType>
              <Shade />
              <Control $top={501} $h={28}>
                <svg width="23" height="28">
                  <path d="M10.500 10L9 17H11L11.500 23H17L17.500 17H19.500L18 10Z" fill="#f3b13c" stroke="#a5752b" strokeWidth=".6" />
                  <circle cx="14.200" cy="7.500" r="3.300" fill="#f6bb45" stroke="#a5752b" strokeWidth=".6" />
                  <path d="M12 11H16.500L14.200 15Z" fill="#e3762e" />
                </svg>
              </Control>
              <Control $top={539} $h={55}>
                <svg width="23" height="55" fill="none" stroke="#666" strokeWidth="2.600">
                  <path d="M9 14.500H20M14.500 9V20M9 42.500H20" />
                  <path d="M4 28.500H23" stroke="#e6e6e6" strokeWidth="1" />
                </svg>
              </Control>
            </MapArea>
          </Body>
        </Page>
        <ScrollTrack><ScrollThumb /></ScrollTrack>
      </Viewport>
    </Window>
  );
}
